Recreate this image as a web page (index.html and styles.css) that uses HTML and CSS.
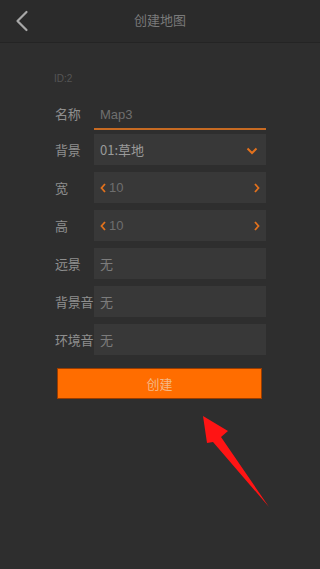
FILE: index.html
```html
<!DOCTYPE html>
<html lang="zh">
<head>
<meta charset="utf-8">
<link rel="stylesheet" href="styles.css">
</head>
<body>
<div class="screen">
  <header class="topbar">
    <svg class="back" width="14" height="22" viewBox="0 0 14 22"><polyline points="11.5,2 2.5,11 11.5,20" fill="none" stroke="#a8a8a8" stroke-width="2.2" stroke-linecap="round" stroke-linejoin="round"/></svg>
    <div class="title">创建地图</div>
  </header>
  <main class="content">
    <div class="id">ID:2</div>
    <div class="form">
      <div class="label first">名称</div>
      <div class="field name">Map3</div>

      <div class="label">背景</div>
      <div class="field box">
        <span class="val light">01:草地</span>
        <svg class="down" width="12" height="8" viewBox="0 0 12 8"><polyline points="1.5,1.5 6,6 10.5,1.5" fill="none" stroke="#e2711d" stroke-width="2"/></svg>
      </div>

      <div class="label">宽</div>
      <div class="field box stepper">
        <svg class="arr" width="6" height="10" viewBox="0 0 6 10"><polyline points="5,1 1.5,5 5,9" fill="none" stroke="#e2711d" stroke-width="1.8"/></svg>
        <span class="val">10</span>
        <svg class="arr right" width="6" height="10" viewBox="0 0 6 10"><polyline points="1,1 4.5,5 1,9" fill="none" stroke="#e2711d" stroke-width="1.8"/></svg>
      </div>

      <div class="label">高</div>
      <div class="field box stepper">
        <svg class="arr" width="6" height="10" viewBox="0 0 6 10"><polyline points="5,1 1.5,5 5,9" fill="none" stroke="#e2711d" stroke-width="1.8"/></svg>
        <span class="val">10</span>
        <svg class="arr right" width="6" height="10" viewBox="0 0 6 10"><polyline points="1,1 4.5,5 1,9" fill="none" stroke="#e2711d" stroke-width="1.8"/></svg>
      </div>

      <div class="label">远景</div>
      <div class="field box"><span class="val">无</span></div>

      <div class="label">背景音</div>
      <div class="field box"><span class="val">无</span></div>

      <div class="label">环境音</div>
      <div class="field box"><span class="val">无</span></div>
    </div>
    <button class="create">创建</button>
    <svg class="pointer" width="80" height="100" viewBox="0 0 80 100"><polygon points="3,6 28,21 21,27 69,97 13,32 7,33" fill="#ff1414"/></svg>
  </main>
</div>
</body>
</html>
```

FILE: styles.css
```css
* { box-sizing: border-box; }
html, body {
  margin: 0;
  padding: 0;
  background: #2e2e2e;
}
body {
  font-family: "Noto Sans CJK SC", "Noto Sans", sans-serif;
  width: 320px;
  height: 569px;
  overflow: hidden;
}
.screen {
  width: 320px;
  height: 569px;
  display: flex;
  flex-direction: column;
}
.topbar {
  height: 43px;
  flex: none;
  background: #2b2b2b;
  border-bottom: 1px solid #242424;
  display: flex;
  align-items: center;
  justify-content: center;
  position: relative;
}
.back {
  position: absolute;
  left: 15px;
  top: 10px;
}
.title {
  color: #7a7a7a;
  font-size: 13px;
  line-height: 20px;
  margin-top: -2px;
}
.content {
  position: relative;
  flex: 1;
  display: flex;
  flex-direction: column;
}
.id {
  margin: 30px 0 0 54px;
  font-family: "Liberation Sans", sans-serif;
  font-size: 10px;
  line-height: 12px;
  color: #555;
}
.form {
  margin: 11px 0 0 55px;
  width: 211px;
  display: grid;
  grid-template-columns: 39px 172px;
  grid-auto-rows: 31px;
  row-gap: 7px;
}
.label {
  display: flex;
  align-items: center;
  font-size: 13px;
  color: #8e8e8e;
  white-space: nowrap;
  letter-spacing: -0.3px;
}
.label.first {
  padding-top: 4px;
}
.field {
  display: flex;
  align-items: center;
  font-size: 13px;
  color: #7c7c7c;
}
.field.name {
  align-self: start;
  height: 34px;
  padding: 4px 0 0 6px;
  border-bottom: 2px solid #c76a22;
  font-family: "Liberation Sans", sans-serif;
  color: #6f6f6f;
}
.field.box {
  background: #383838;
  padding: 0 6px;
}
.val.light { color: #9a9a9a; }
.down { margin-left: auto; margin-right: 2px; margin-top: 2px; }
.stepper { padding: 0 4px 0 3px; }
.stepper .val {
  margin-left: 3px;
  font-family: "Liberation Sans", sans-serif;
  color: #6e6e6e;
  font-size: 13px;
}
.arr.right { margin-left: auto; }
.create {
  margin: 13px 0 0 57px;
  width: 205px;
  height: 31px;
  background: #ff6d00;
  border: 1px solid #9a3c00;
  color: #f5b884;
  font-family: "Noto Sans CJK SC", sans-serif;
  font-size: 13px;
  padding: 0;
}
.pointer {
  position: absolute;
  left: 200px;
  top: 367px;
}
```
